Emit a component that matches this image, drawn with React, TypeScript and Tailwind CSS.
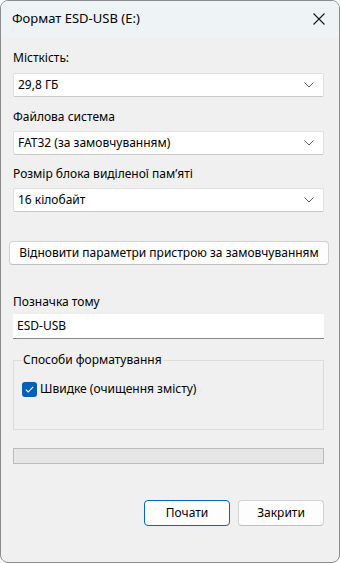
import React from "react";

const font = { fontFamily: '"Noto Sans", "Open Sans", sans-serif' };

function Chevron() {
  return (
    <svg width="10" height="6" viewBox="0 0 10 6" className="shrink-0">
      <path d="M0.5 0.5 L5 5 L9.5 0.5" fill="none" stroke="#5f5f5f" strokeWidth="1" />
    </svg>
  );
}

function Combo({ value }: { value: string }) {
  return (
    <div className="w-[311px] h-[24px] bg-white border border-[#e0e0e0] border-b-[#c8c8c8] rounded-[2px] flex items-center justify-between pl-[4px] pr-[9px] text-[12px] text-black">
      <span>{value}</span>
      <Chevron />
    </div>
  );
}

export default function App() {
  return (
    <div
      className="w-[340px] h-[563px] rounded-[8px] border border-[#8c8c8c] overflow-hidden bg-[#f0f0f0] flex flex-col text-black"
      style={font}
    >
      <div className="h-[36px] bg-[#eef4f6] flex items-center justify-between pl-[11px] pr-[14px] shrink-0">
        <span className="text-[13px]">Формат ESD-USB (E:)</span>
        <svg width="12" height="12" viewBox="0 0 12 12">
          <path d="M0.5 0.5 L11.5 11.5 M11.5 0.5 L0.5 11.5" stroke="#1a1a1a" strokeWidth="1.1" fill="none" />
        </svg>
      </div>
      <div className="flex flex-col pl-[12px] text-[12px] leading-[16px]">
        <div className="mt-[13px]">Місткість:</div>
        <div className="mt-[7px]">
          <Combo value="29,8 ГБ" />
        </div>
        <div className="mt-[12px]">Файлова система</div>
        <div className="mt-[6px]">
          <Combo value="FAT32 (за замовчуванням)" />
        </div>
        <div className="mt-[11px]">Розмір блока виділеної пам’яті</div>
        <div className="mt-[6px]">
          <Combo value="16 кілобайт" />
        </div>
        <div className="mt-[29px] -ml-[4px] w-[320px] h-[24px] bg-[#fdfdfd] border border-[#d2d2d2] border-b-[#c0c0c0] rounded-[4px] flex items-center justify-center">
          Відновити параметри пристрою за замовчуванням
        </div>
        <div className="mt-[29px]">Позначка тому</div>
        <div className="mt-[4px] w-[311px] h-[25px] bg-white border-b border-[#8a8a8a] flex items-center pl-[4px]">
          ESD-USB
        </div>
        <div className="mt-[21px] w-[311px] h-[70px] border border-[#dcdcdc] relative">
          <div className="absolute left-[8px] -top-[9px] bg-[#f0f0f0] px-[1px]">Способи форматування</div>
          <div className="absolute left-[8px] top-[20px] flex items-center gap-[3px]">
            <div className="w-[15px] h-[15px] rounded-[3px] bg-[#005fb8] flex items-center justify-center">
              <svg width="9" height="7" viewBox="0 0 9 7">
                <path d="M0.8 3.6 L3.2 5.9 L8.2 0.9" fill="none" stroke="white" strokeWidth="1.1" />
              </svg>
            </div>
            <span>Швидке (очищення змісту)</span>
          </div>
        </div>
        <div className="mt-[18px] w-[311px] h-[16px] bg-[#e6e6e6] border border-[#bcbcbc]"></div>
        <div className="mt-[36px] w-[311px] flex justify-end gap-[8px]">
          <div className="w-[86px] h-[26px] bg-[#fdfdfd] border border-[#0067c0] rounded-[4px] flex items-center justify-center">
            Почати
          </div>
          <div className="w-[86px] h-[26px] bg-[#fdfdfd] border border-[#d2d2d2] border-b-[#c0c0c0] rounded-[4px] flex items-center justify-center">
            Закрити
          </div>
        </div>
      </div>
    </div>
  );
}
